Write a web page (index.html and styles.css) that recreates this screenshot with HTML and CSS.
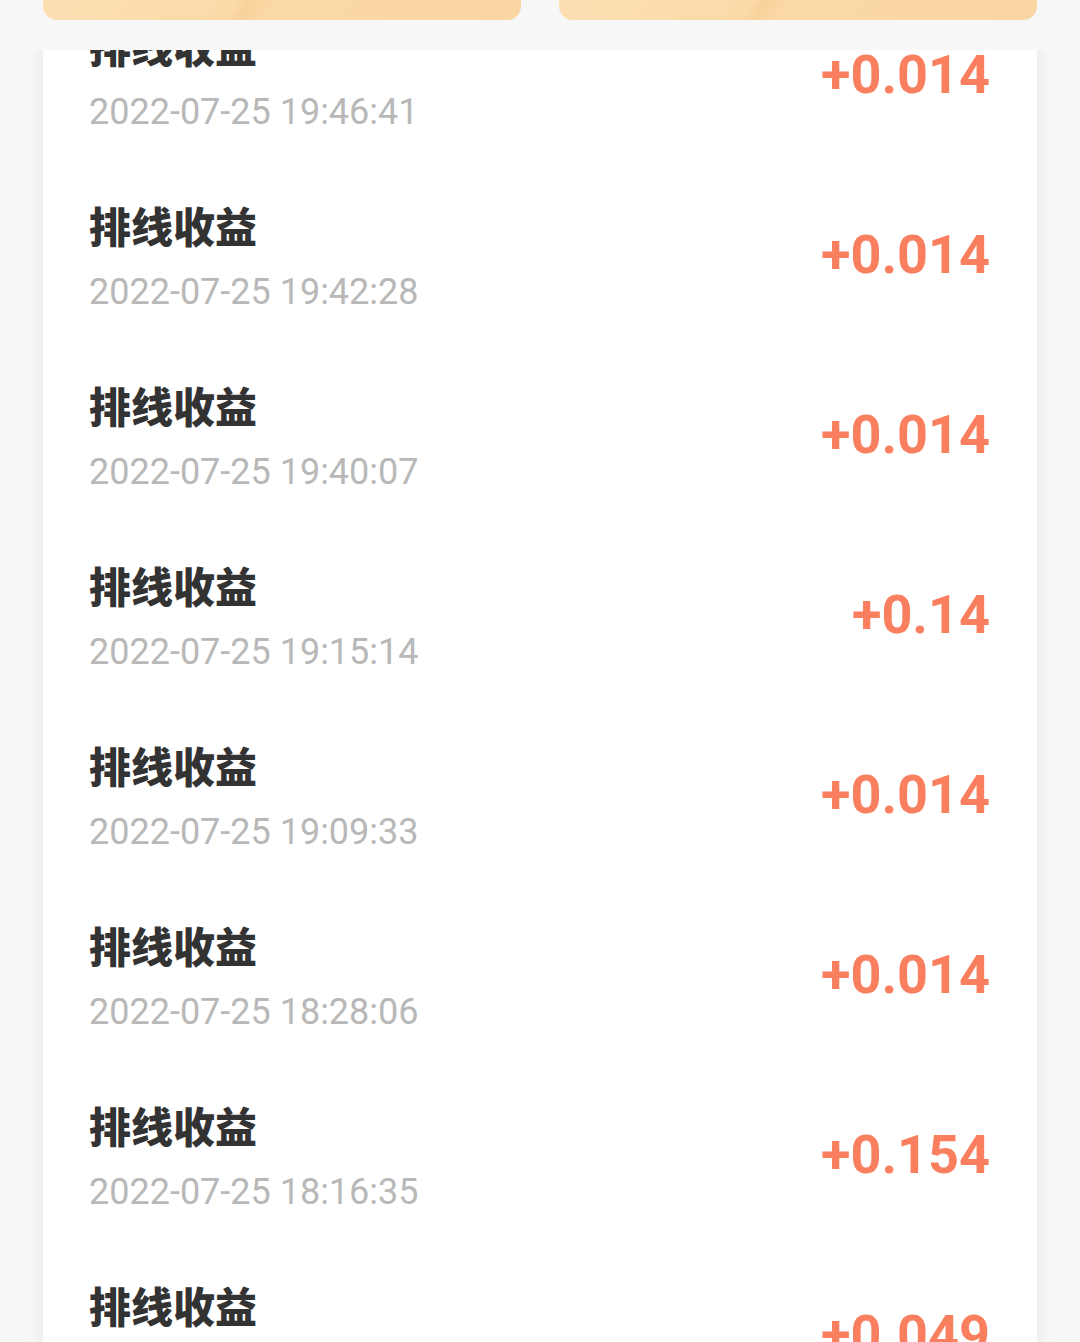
FILE: index.html
```html
<!doctype html>
<html>
<head>
<meta charset="utf-8">
<title>收益明细</title>
<link rel="stylesheet" href="styles.css">
</head>
<body>
<div class="top">
	<div class="tabs">
		<div class="tab"></div>
		<div class="tab"></div>
	</div>
</div>
<div class="view">
	<ul class="list">
		<li class="row"><div class="info"><div class="name">排线收益</div><div class="time">2022-07-25 19:46:41</div></div><div class="num">+0.014</div></li>
		<li class="row"><div class="info"><div class="name">排线收益</div><div class="time">2022-07-25 19:42:28</div></div><div class="num">+0.014</div></li>
		<li class="row"><div class="info"><div class="name">排线收益</div><div class="time">2022-07-25 19:40:07</div></div><div class="num">+0.014</div></li>
		<li class="row"><div class="info"><div class="name">排线收益</div><div class="time">2022-07-25 19:15:14</div></div><div class="num">+0.14</div></li>
		<li class="row"><div class="info"><div class="name">排线收益</div><div class="time">2022-07-25 19:09:33</div></div><div class="num">+0.014</div></li>
		<li class="row"><div class="info"><div class="name">排线收益</div><div class="time">2022-07-25 18:28:06</div></div><div class="num">+0.014</div></li>
		<li class="row"><div class="info"><div class="name">排线收益</div><div class="time">2022-07-25 18:16:35</div></div><div class="num">+0.154</div></li>
		<li class="row"><div class="info"><div class="name">排线收益</div><div class="time">2022-07-25 18:02:11</div></div><div class="num">+0.049</div></li>
	</ul>
</div>
</body>
</html>
```

FILE: styles.css
```css
html,body{margin:0;padding:0;}
body{background:#f7f7f7;font-family:Roboto,"Noto Sans CJK SC",sans-serif;width:1080px;height:1342px;overflow:hidden;}
ul{padding:0;margin:0;}
li{margin:0;padding:0;list-style-type:none;}

.top{height:50px;overflow:hidden;background:#f7f7f7;position:relative;z-index:2;}
.tabs{display:flex;gap:38px;padding:0 43px;margin-top:-80px;}
.tab{flex:1;height:100px;border-radius:14px;background:linear-gradient(120deg,#fde0b4 0%,#fbdaa8 45%,#f8d29a 47%,#fbd9a7 52%,#f9d6a2 100%);}

.view{height:1292px;overflow:hidden;padding:0 43px;}
.list{background:#fff;margin-top:-65px;box-shadow:0 0 18px rgba(0,0,0,0.07);}
.row{height:180px;box-sizing:border-box;display:flex;align-items:center;justify-content:space-between;padding:0 47px 0 46px;}
.info{display:flex;flex-direction:column;gap:23px;padding-top:3px;}
.name{font-family:"Noto Sans CJK SC",sans-serif;font-weight:900;font-size:42px;line-height:48px;color:#333;}
.time{font-size:36px;line-height:40px;color:#b8b8b8;}
.num{font-size:54px;font-weight:bold;color:#f97f5f;line-height:60px;}
```
